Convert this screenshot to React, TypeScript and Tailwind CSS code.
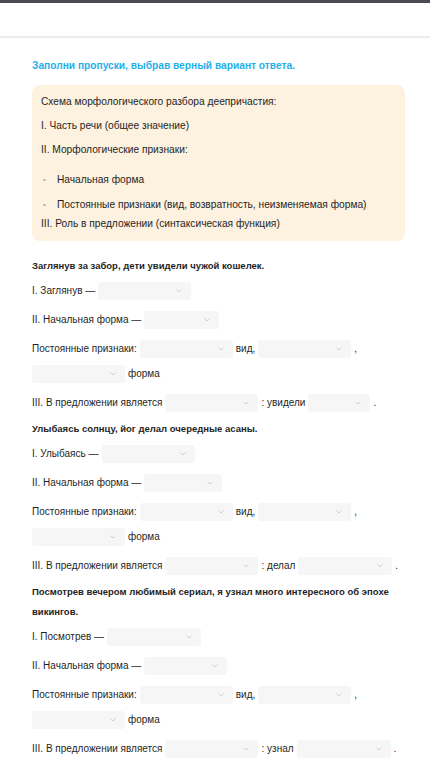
import React from 'react';

type Part = string | { w: number };

const Select = ({ w }: { w: number }) => (
    <div className="relative h-[18px] shrink-0 rounded-[3px] bg-[#f6f6f6]" style={{ width: w }}>
        <svg className="absolute top-[7px] right-[9px]" width="6" height="4" viewBox="0 0 6 4" fill="none">
            <path d="M0.5 0.5L3 3L5.5 0.5" stroke="#cfcfcf" strokeWidth="1" />
        </svg>
    </div>
);

const Row = ({ parts, first }: { parts: Part[]; first?: boolean }) => (
    <div className={`flex flex-wrap items-center gap-x-[3px] gap-y-[7px] ${first ? 'mt-[6px]' : 'mt-[11px]'}`}>
        {parts.map((p, i) =>
            typeof p === 'string' ? (
                <span key={i} className="leading-[18px] whitespace-nowrap">
                    {p}
                </span>
            ) : (
                <Select key={i} w={p.w} />
            ),
        )}
    </div>
);

const exercises: { sentence: string; rows: Part[][] }[] = [
    {
        sentence: 'Заглянув за забор, дети увидели чужой кошелек.',
        rows: [
            ['I. Заглянув —', { w: 93 }],
            ['II. Начальная форма —', { w: 75 }],
            ['Постоянные признаки:', { w: 93 }, 'вид,', { w: 93 }, ',', { w: 93 }, 'форма'],
            ['III. В предложении является', { w: 93 }, ': увидели', { w: 62 }, '.'],
        ],
    },
    {
        sentence: 'Улыбаясь солнцу, йог делал очередные асаны.',
        rows: [
            ['I. Улыбаясь —', { w: 93 }],
            ['II. Начальная форма —', { w: 78 }],
            ['Постоянные признаки:', { w: 93 }, 'вид,', { w: 93 }, ',', { w: 93 }, 'форма'],
            ['III. В предложении является', { w: 93 }, ': делал', { w: 94 }, '.'],
        ],
    },
    {
        sentence: 'Посмотрев вечером любимый сериал, я узнал много интересного об эпохе викингов.',
        rows: [
            ['I. Посмотрев —', { w: 94 }],
            ['II. Начальная форма —', { w: 83 }],
            ['Постоянные признаки:', { w: 93 }, 'вид,', { w: 93 }, ',', { w: 93 }, 'форма'],
            ['III. В предложении является', { w: 93 }, ': узнал', { w: 94 }, '.'],
        ],
    },
];

export default function App() {
    return (
        <div className="min-h-[763px] bg-white text-[10px] text-[#1f1f1f]" style={{ fontFamily: '"Liberation Sans", Arial, sans-serif' }}>
            {/* Header */}
            <div className="h-[3px] bg-[#4b4a54]" />
            <div className="h-[35px] border-b-2 border-[#ececec]" />

            <main className="pt-[20px] pr-[18px] pl-[32px]">
                <h1 className="text-[10.2px] leading-[16px] font-bold text-[#1fb0ea]">Заполни пропуски, выбрав верный вариант ответа.</h1>

                {/* Scheme */}
                <div className="mt-[11px] mr-[7px] rounded-[8px] bg-[#fdf1df] px-[9px] py-[9px] text-[10.2px] leading-[16px]">
                    <p>Схема морфологического разбора деепричастия:</p>
                    <p className="mt-[8px]">I. Часть речи (общее значение)</p>
                    <p className="mt-[8px]">II. Морфологические признаки:</p>
                    <ul className="mt-[14px]">
                        <li className="flex items-center">
                            <span className="w-[16px] pl-[2px] text-[8px] text-[#aaa]">•</span>Начальная форма
                        </li>
                        <li className="mt-[9px] flex items-center">
                            <span className="w-[16px] pl-[2px] text-[8px] text-[#aaa]">•</span>Постоянные признаки (вид, возвратность, неизменяемая форма)
                        </li>
                    </ul>
                    <p className="mt-[3px]">III. Роль в предложении (синтаксическая функция)</p>
                </div>

                {/* Exercises */}
                <div className="mt-[15px] mr-[7px]">
                    {exercises.map((ex, i) => (
                        <div key={i} className={i > 0 ? 'mt-[7px]' : ''}>
                            <p className="text-[9.5px] leading-[20px] font-bold">{ex.sentence}</p>
                            {ex.rows.map((r, j) => (
                                <Row key={j} parts={r} first={j === 0} />
                            ))}
                        </div>
                    ))}
                </div>
            </main>
        </div>
    );
}
